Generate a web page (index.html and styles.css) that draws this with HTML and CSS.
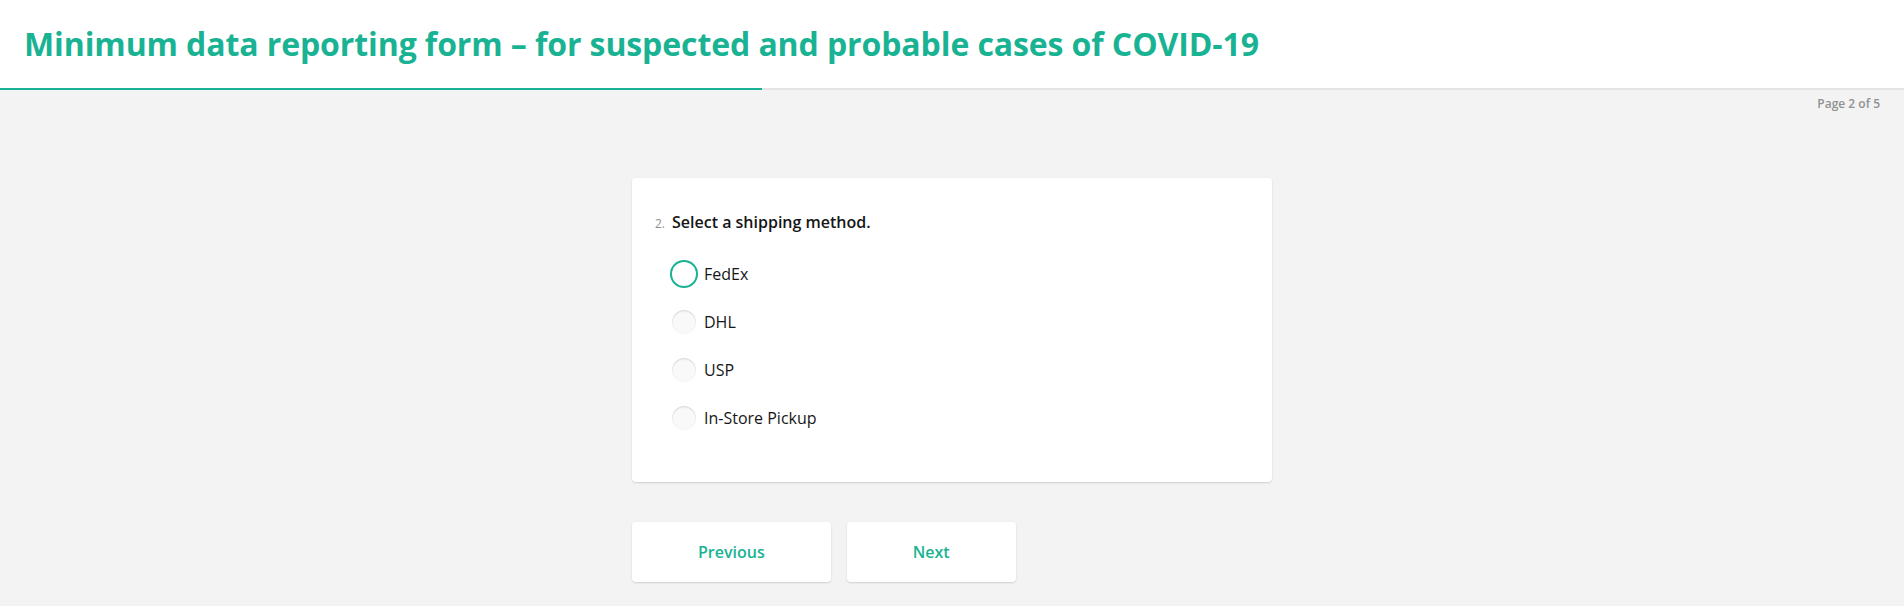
FILE: index.html
```html
<!DOCTYPE html>
<html lang="en">
<head>
<meta charset="utf-8">
<title>Minimum data reporting form</title>
<link rel="stylesheet" href="styles.css">
</head>
<body>
<header class="header">
  <h1 class="title">Minimum data reporting form – for suspected and probable cases of COVID-19</h1>
</header>
<div class="progress"><div class="progress-bar" style="width: 40%"></div></div>
<div class="page-num">Page 2 of 5</div>
<main class="content">
  <section class="card">
    <div class="question-title">
      <span class="q-num">2.</span>
      <span class="q-text">Select a shipping method.</span>
    </div>
    <div class="radio-group">
      <label class="item"><span class="decorator focused"></span><span class="item-label">FedEx</span></label>
      <label class="item"><span class="decorator"></span><span class="item-label">DHL</span></label>
      <label class="item"><span class="decorator"></span><span class="item-label">USP</span></label>
      <label class="item"><span class="decorator"></span><span class="item-label">In-Store Pickup</span></label>
    </div>
  </section>
  <div class="nav">
    <button class="btn" type="button">Previous</button>
    <button class="btn" type="button">Next</button>
  </div>
</main>
</body>
</html>
```
FILE: styles.css
```css
* { box-sizing: border-box; }
html, body { margin: 0; padding: 0; }
body {
  background: #f3f3f3;
  font-family: "Open Sans", "Noto Sans", sans-serif;
  color: #161616;
  height: 606px;
  overflow: hidden;
}
.header {
  background: #ffffff;
  padding: 24px 24px;
  height: 88px;
}
.title {
  margin: 0;
  font-size: 32px;
  line-height: 40px;
  font-weight: 700;
  letter-spacing: -0.1px;
  color: #19b394;
  white-space: nowrap;
}
.progress {
  height: 2px;
  background: #e4e4e4;
}
.progress-bar {
  height: 2px;
  background: #19b394;
}
.page-num {
  padding: 6px 24px 0 0;
  text-align: right;
  font-size: 12px;
  line-height: 16px;
  font-weight: 600;
  color: #909090;
}
.content {
  width: 640px;
  margin: 66px auto 0;
}
.card {
  background: #ffffff;
  border-radius: 4px;
  box-shadow: 0 1px 2px rgba(0, 0, 0, 0.15);
  padding: 32px 24px 40px 23px;
}
.question-title {
  display: flex;
  align-items: baseline;
  height: 24px;
  line-height: 24px;
}
.q-num {
  width: 17px;
  flex: none;
  font-size: 12px;
  line-height: 16px;
  color: #909090;
}
.q-text {
  font-size: 16px;
  font-weight: 600;
  color: #161616;
}
.radio-group {
  margin: 16px 0 0 17px;
  display: flex;
  flex-direction: column;
}
.item {
  display: flex;
  align-items: center;
  gap: 8px;
  height: 48px;
}
.decorator {
  width: 24px;
  height: 24px;
  border-radius: 50%;
  background: #f9f9f9;
  box-shadow: inset 0 1px 2px rgba(0, 0, 0, 0.15);
  flex: none;
}
.decorator.focused {
  background: #ffffff;
  box-shadow: 0 0 0 2px #19b394;
}
.item-label {
  font-size: 16px;
  line-height: 24px;
  color: #161616;
}
.nav {
  display: flex;
  gap: 16px;
  margin-top: 40px;
}
.btn {
  font-family: inherit;
  font-size: 16px;
  line-height: 24px;
  font-weight: 600;
  color: #19b394;
  background: #ffffff;
  border: none;
  border-radius: 4px;
  box-shadow: 0 1px 2px rgba(0, 0, 0, 0.15);
  padding: 18px 66px;
  height: 60px;
}
```
